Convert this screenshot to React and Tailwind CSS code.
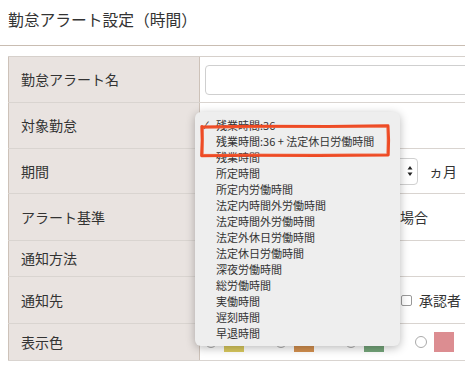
const font = { fontFamily: '"Noto Sans CJK JP", "Noto Sans", sans-serif' };

const rows = [
  { label: "勤怠アラート名", h: "h-[46px]" },
  { label: "対象勤怠", h: "h-[46px]" },
  { label: "期間", h: "h-[45px]" },
  { label: "アラート基準", h: "h-[47px]" },
  { label: "通知方法", h: "h-[36px]" },
  { label: "通知先", h: "h-[47px]" },
  { label: "表示色", h: "h-[37px]" },
];

const menuItems = [
  "残業時間:36",
  "残業時間:36 + 法定休日労働時間",
  "残業時間",
  "所定時間",
  "所定内労働時間",
  "法定内時間外労働時間",
  "法定時間外労働時間",
  "法定外休日労働時間",
  "法定休日労働時間",
  "深夜労働時間",
  "総労働時間",
  "実働時間",
  "遅刻時間",
  "早退時間",
];

const swatches = ["bg-[#d9c95e]", "bg-[#d4904f]", "bg-[#74a57a]", "bg-[#dc8d91]"];

const RowContent = ({ i }) => {
  if (i === 0)
    return (
      <div className="pl-[5px] pt-[8px] w-full">
        <div className="h-[30px] w-[300px] rounded-[4px] border border-[#cfcfcf] bg-white" />
      </div>
    );
  if (i === 2)
    return (
      <div className="flex items-center h-full">
        <div className="ml-[150px] w-[68px] h-[27px] rounded-[4px] border border-[#d0d0d0] bg-white flex items-center justify-end pr-[4px]">
          <svg width="6" height="12" viewBox="0 0 6 12">
            <path d="M3 1 L5.5 4.5 L0.5 4.5 Z M3 11 L5.5 7.5 L0.5 7.5 Z" fill="#222" />
          </svg>
        </div>
        <span className="ml-[11px] text-[14px] text-[#333]">ヵ月</span>
      </div>
    );
  if (i === 3)
    return (
      <div className="flex items-center h-full pl-[200px] text-[14px] text-[#333]">場合</div>
    );
  if (i === 5)
    return (
      <div className="flex items-center h-full pl-[201px] pt-[1px]">
        <div className="w-[11px] h-[11px] rounded-[2px] border border-[#999] bg-white" />
        <span className="ml-[7px] text-[14px] text-[#333]">承認者</span>
      </div>
    );
  if (i === 6)
    return (
      <div className="flex items-center h-full pl-[5px] gap-[31px]">
        {swatches.map((c) => (
          <div key={c} className="flex items-center gap-[7px]">
            <div className="w-[12px] h-[12px] rounded-full border border-[#aaa] bg-white" />
            <div className={`w-[20px] h-[20px] ${c}`} />
          </div>
        ))}
      </div>
    );
  return null;
};

const RedBox = () => (
  <svg
    className="absolute left-[198px] top-[122px]"
    width="196"
    height="38"
    viewBox="0 0 196 38"
  >
    <path
      d="M4 5 L60 4.2 L130 4.6 L190 3.8 L190.6 18 L190.2 33 L120 33.6 L50 33.2 L3.6 33.8 L4.2 18 L3.8 4.4"
      fill="none"
      stroke="#ee4a24"
      strokeWidth="3"
      strokeLinejoin="round"
      strokeLinecap="round"
    />
    <path
      d="M5 6 L80 5.4 L189 5 M189.2 6 L189 32 M188 32.2 L5 32.4 M5.2 32 L5.4 6"
      fill="none"
      stroke="#f0603a"
      strokeWidth="1"
      opacity="0.7"
    />
  </svg>
);

export default function App() {
  return (
    <div className="relative w-[465px] h-[369px] overflow-hidden bg-white text-[#333]" style={font}>
      <div className="pl-[8px] pt-[9px] h-[46px] border-b border-[#c9bdb2]">
        <h1 className="text-[15.75px] leading-[22px] text-[#333]">勤怠アラート設定（時間）</h1>
      </div>

      <div className="ml-[8px] mt-[10px] border-t border-[#d6d0cb]">
        {rows.map((r, i) => (
          <div key={r.label} className={`flex ${r.h} border-b border-[#d9d4d0]`}>
            <div className="w-[192px] shrink-0 bg-[#e9e3e0] border-l border-r border-[#cdc2b9] flex items-center pl-[12px] text-[14px] text-[#333]">
              {r.label}
            </div>
            <div className="flex-1 relative">
              <RowContent i={i} />
            </div>
          </div>
        ))}
      </div>

      {/* dropdown */}
      <div className="absolute left-[195px] top-[112px] w-[205px] h-[234px] rounded-[6px] bg-[#eeeeee] shadow-[0_2px_10px_rgba(0,0,0,0.28)] pt-[5px]">
        {menuItems.map((t, i) => (
          <div key={t} className="relative h-[16px] leading-[16px] pl-[21px] text-[11px] text-[#333]">
            {i === 0 && <span className="absolute left-[7px] top-0 text-[10px]">✓</span>}
            {t}
          </div>
        ))}
      </div>

      <RedBox />
    </div>
  );
}
